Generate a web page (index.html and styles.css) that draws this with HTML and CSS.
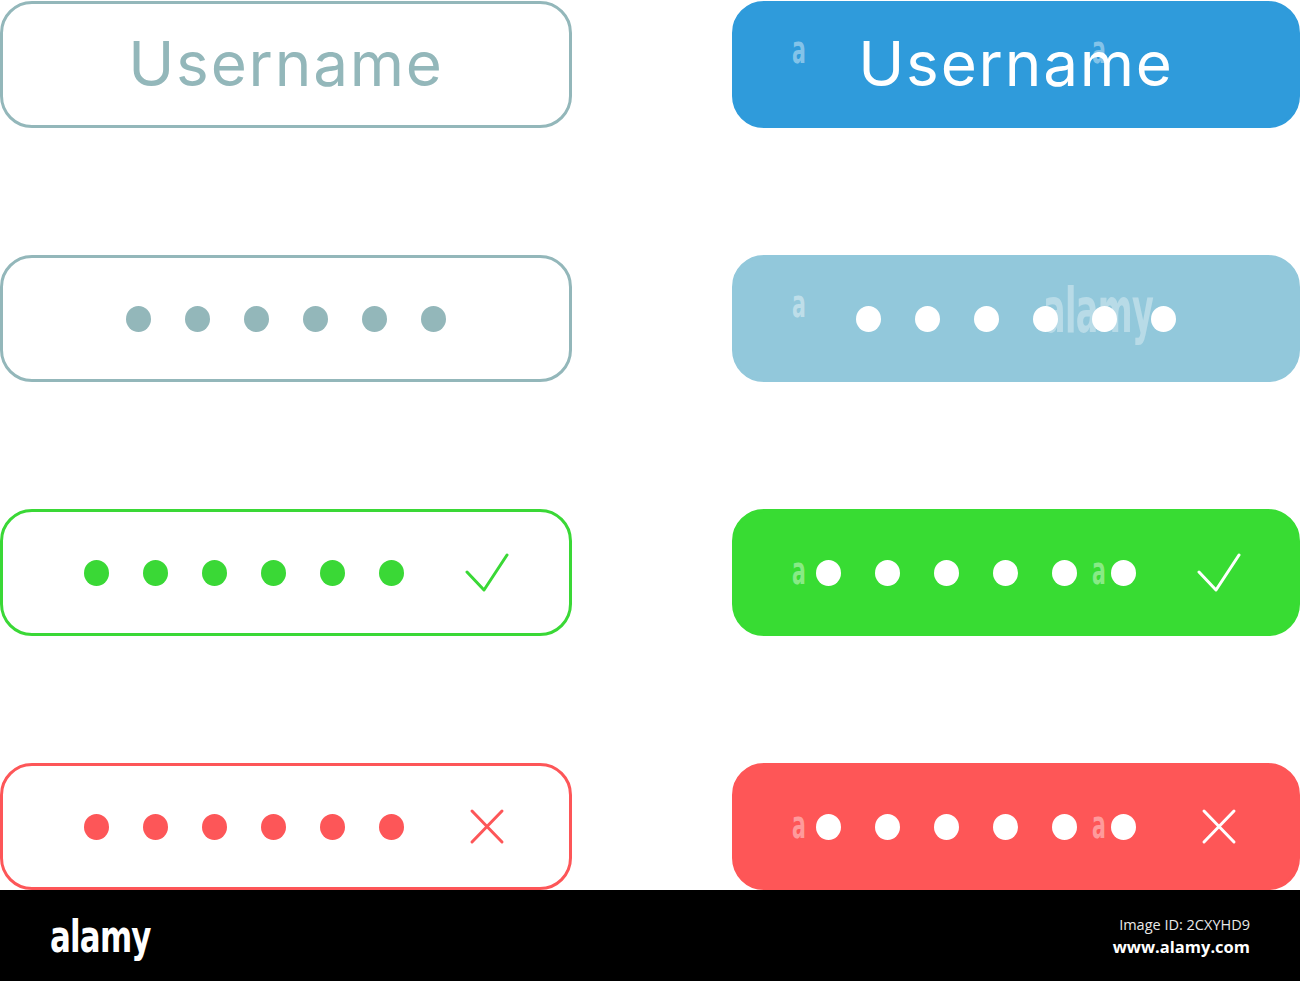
FILE: index.html
```html
<!DOCTYPE html>
<html lang="en">
<head>
    <meta charset="UTF-8">
    <title>Login field states</title>
    <link rel="stylesheet" href="styles.css">
</head>
<body>
    <div class="sheet">
        <!-- row 1: username -->
        <div class="field outline grey center">
            <span class="label">Username</span>
        </div>
        <div class="field fill blue center">
            <span class="label">Username</span>
            <span class="mark mark-a">a</span>
            <span class="mark mark-b">a</span>
        </div>

        <!-- row 2: password, neutral -->
        <div class="field outline grey center">
            <div class="dots">
                <i class="dot"></i><i class="dot"></i><i class="dot"></i>
                <i class="dot"></i><i class="dot"></i><i class="dot"></i>
            </div>
        </div>
        <div class="field fill sky center">
            <div class="dots">
                <i class="dot"></i><i class="dot"></i><i class="dot"></i>
                <i class="dot"></i><i class="dot"></i><i class="dot"></i>
            </div>
            <span class="mark mark-a">a</span>
            <span class="mark mark-logo">alamy</span>
        </div>

        <!-- row 3: password, valid -->
        <div class="field outline green">
            <div class="dots">
                <i class="dot"></i><i class="dot"></i><i class="dot"></i>
                <i class="dot"></i><i class="dot"></i><i class="dot"></i>
            </div>
            <svg class="state" viewBox="0 0 44 40" width="44" height="40">
                <path d="M2 19 L19 37 L42 2" />
            </svg>
        </div>
        <div class="field fill green">
            <div class="dots">
                <i class="dot"></i><i class="dot"></i><i class="dot"></i>
                <i class="dot"></i><i class="dot"></i><i class="dot"></i>
            </div>
            <svg class="state" viewBox="0 0 44 40" width="44" height="40">
                <path d="M2 19 L19 37 L42 2" />
            </svg>
            <span class="mark mark-a">a</span>
            <span class="mark mark-b">a</span>
        </div>

        <!-- row 4: password, invalid -->
        <div class="field outline red">
            <div class="dots">
                <i class="dot"></i><i class="dot"></i><i class="dot"></i>
                <i class="dot"></i><i class="dot"></i><i class="dot"></i>
            </div>
            <svg class="state" viewBox="0 0 44 40" width="44" height="40">
                <path d="M7 4 L37 35 M37 4 L7 35" />
            </svg>
        </div>
        <div class="field fill red">
            <div class="dots">
                <i class="dot"></i><i class="dot"></i><i class="dot"></i>
                <i class="dot"></i><i class="dot"></i><i class="dot"></i>
            </div>
            <svg class="state" viewBox="0 0 44 40" width="44" height="40">
                <path d="M7 4 L37 35 M37 4 L7 35" />
            </svg>
            <span class="mark mark-a">a</span>
            <span class="mark mark-b">a</span>
        </div>
    </div>

    <footer class="bar">
        <span class="logo">alamy</span>
        <div class="credit">
            <div class="credit-id">Image ID: 2CXYHD9</div>
            <div class="credit-url">www.alamy.com</div>
        </div>
    </footer>
</body>
</html>
```

FILE: styles.css
```css
* {
    margin: 0;
    padding: 0;
    box-sizing: border-box;
}

body {
    background: #ffffff;
    width: 1300px;
    height: 981px;
    overflow: hidden;
    font-family: 'Inter', 'Open Sans', sans-serif;
}

.sheet {
    display: grid;
    grid-template-columns: 572px 568px;
    grid-auto-rows: 127px;
    column-gap: 160px;
    row-gap: 127px;
    padding-top: 1px;
    height: 890px;
}

/* one input field */
.field {
    position: relative;
    display: flex;
    align-items: center;
    padding-left: 81px;
    border: 3px solid;
    border-radius: 32px;
    overflow: hidden;
}

.field.center {
    justify-content: center;
    padding-left: 0;
}

.label {
    font-size: 62px;
    line-height: 1;
    font-weight: 400;
    letter-spacing: 1.8px;
    padding-bottom: 2px;
}

.dots {
    display: flex;
    gap: 34px;
}

.dot {
    display: block;
    width: 25px;
    height: 26px;
    border-radius: 50%;
    background: currentColor;
}

.state {
    margin-left: 61px;
    fill: none;
    stroke: currentColor;
    stroke-width: 3;
    stroke-linecap: round;
    stroke-linejoin: round;
}

/* outlined variants */
.outline { background: #ffffff; }
.outline.grey { border-color: #93b7ba; color: #93b7ba; }
.outline.green { border-color: #3ad836; color: #3ad836; }
.outline.red { border-color: #fd5658; color: #fd5658; }

/* filled variants */
.fill { color: #ffffff; }
.fill.blue { background: #2f9bdb; border-color: #2f9bdb; }
.fill.sky { background: #92c8db; border-color: #92c8db; }
.fill.green { background: #38dc33; border-color: #38dc33; }
.fill.red { background: #fe5657; border-color: #fe5657; }

/* faint stock watermark letters */
.mark {
    position: absolute;
    font-family: 'DejaVu Sans Condensed', 'DejaVu Sans', sans-serif;
    font-weight: 700;
    font-size: 38px;
    line-height: 1;
    color: rgba(255, 255, 255, 0.42);
    transform: scaleX(0.6);
    transform-origin: left top;
}

.mark-a { left: 57px; top: 27px; }
.mark-b { left: 357px; top: 27px; }
.fill.green .mark, .fill.red .mark { top: 40px; }

.mark-logo {
    left: 308px;
    top: 22px;
    font-size: 62px;
    letter-spacing: -1px;
    color: rgba(255, 255, 255, 0.35);
}

/* footer strip */
.bar {
    height: 91px;
    background: #000000;
    display: flex;
    align-items: center;
    justify-content: space-between;
    padding: 0 50px;
}

.logo {
    display: inline-block;
    font-family: 'DejaVu Sans Condensed', 'DejaVu Sans', sans-serif;
    font-weight: 700;
    font-size: 44px;
    letter-spacing: -1px;
    color: #ffffff;
    transform: scaleX(0.78);
    transform-origin: left center;
    margin-top: 2px;
}

.credit {
    text-align: right;
    color: #ffffff;
    font-family: 'Open Sans', sans-serif;
}

.credit-id {
    font-size: 14.5px;
    line-height: 22px;
    color: #e8e8e8;
}

.credit-url {
    font-size: 16.5px;
    font-weight: 700;
    line-height: 22px;
}
```
